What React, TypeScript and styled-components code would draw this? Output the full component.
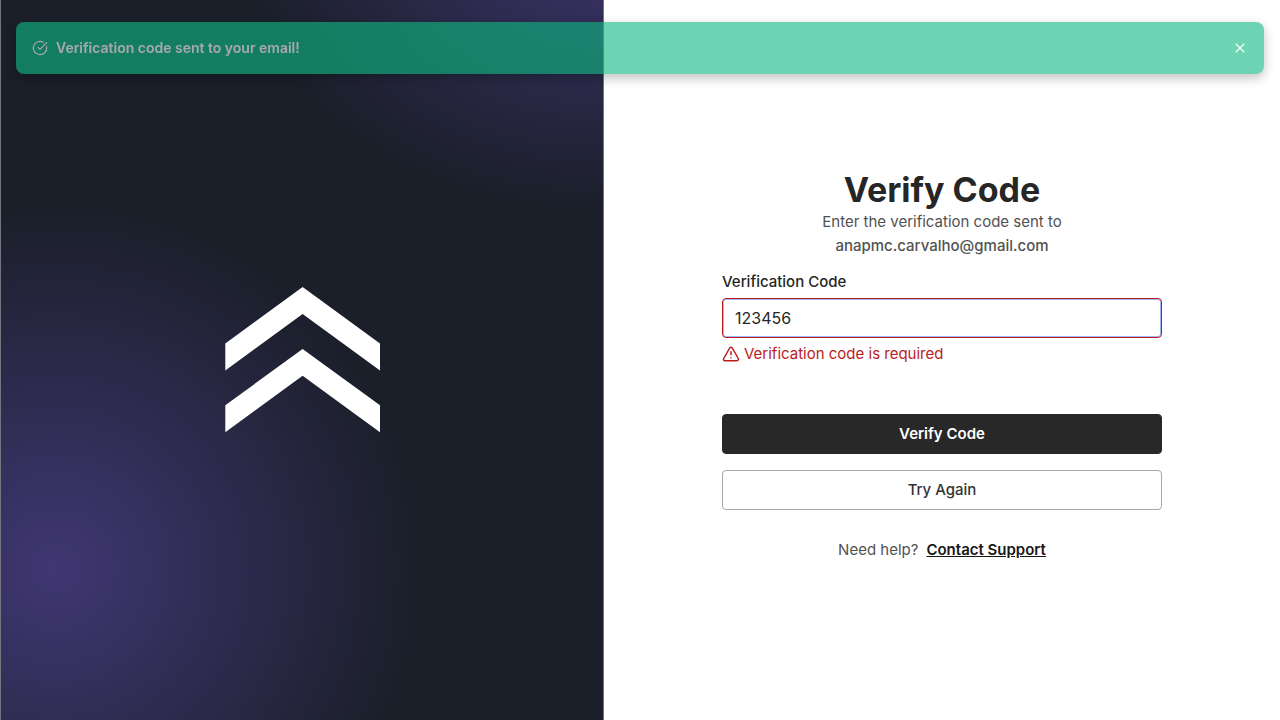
import React, { useState } from "react";
import styled, { createGlobalStyle } from "styled-components";
import { CircleCheckBig, TriangleAlert, X } from "lucide-react";

const GlobalStyle = createGlobalStyle`
  *, *::before, *::after { box-sizing: border-box; }
  body {
    margin: 0;
    background: #fff;
    color: #262626;
    font-family: Inter, "Liberation Sans", sans-serif;
    font-size: 15px;
    line-height: 24px;
  }
  button, input { font: inherit; color: inherit; }
  h1, p { margin: 0; }
`;

const Page = styled.div`
  display: grid;
  grid-template-columns: minmax(0, 604fr) minmax(0, 676fr);
  min-height: 100vh;
`;

const BrandPanel = styled.aside`
  display: flex;
  align-items: center;
  justify-content: center;
  border: solid #74757f;
  border-width: 0 1px;
  background:
    radial-gradient(circle at 9% 79%, #403773 0, rgba(64, 55, 115, 0) 360px),
    radial-gradient(ellipse 350px 250px at 100% -6%, #3a3368 0, rgba(58, 51, 104, 0) 100%),
    #1b1f2a;
`;

const Logo = styled.svg`
  width: 158px;
  height: 146px;
  fill: #fff;
`;

const FormPanel = styled.main`
  display: flex;
  flex-direction: column;
  align-items: center;
  justify-content: center;
  padding: 36px 24px 24px;
`;

const Form = styled.form`
  width: 100%;
  max-width: 440px;
  display: flex;
  flex-direction: column;
  gap: 12px;
`;

const Heading = styled.header`
  text-align: center;
  color: #525252;
`;

const Title = styled.h1`
  font-size: 34px;
  line-height: 40px;
  font-weight: 700;
  color: #262626;
`;

const Email = styled.p`
  font-weight: 500;
`;

const Field = styled.div`
  display: flex;
  flex-direction: column;
  gap: 4px;
`;

const Label = styled.label`
  font-weight: 500;
`;

const Input = styled.input`
  height: 40px;
  padding: 0 12px;
  border: 1px solid #b91c1c;
  border-radius: 4px;
  background: #fff;
  font-size: 16px;
  outline: none;
  box-shadow: inset 0 0 0 1px #9db9f5;
`;

const ErrorText = styled.p`
  display: flex;
  align-items: center;
  gap: 4px;
  color: #b91c1c;
`;

const Actions = styled.div`
  display: flex;
  flex-direction: column;
  gap: 16px;
  padding: 36px 0 16px;
`;

const Button = styled.button<{ $primary?: boolean }>`
  height: 40px;
  border: 1px solid ${(p) => (p.$primary ? "#282828" : "#a8a8a8")};
  border-radius: 4px;
  background: ${(p) => (p.$primary ? "#282828" : "#fff")};
  color: ${(p) => (p.$primary ? "#fff" : "#333")};
  font-weight: ${(p) => (p.$primary ? 600 : 500)};
  cursor: pointer;
`;

const Help = styled.p`
  display: flex;
  justify-content: center;
  gap: 8px;
  color: #525252;
`;

const Link = styled.a`
  color: #171717;
  font-weight: 600;
`;

const Toast = styled.div`
  position: fixed;
  top: 22px;
  left: 16px;
  right: 16px;
  display: flex;
  align-items: center;
  gap: 8px;
  padding: 16px;
  border-radius: 8px;
  background: #10b981;
  color: #fff;
  font-size: 14px;
  line-height: 20px;
  font-weight: 600;
  opacity: 0.61;
  box-shadow: 0 4px 12px rgba(0, 0, 0, 0.4);
`;

const CloseButton = styled.button`
  display: flex;
  margin-left: auto;
  padding: 0;
  border: 0;
  background: none;
  cursor: pointer;
`;

export default function App() {
  const [code, setCode] = useState("123456");
  const [toastOpen, setToastOpen] = useState(true);

  return (
    <>
      <GlobalStyle />
      <Page>
        <BrandPanel>
          <Logo viewBox="0 0 158 146" aria-hidden="true">
            <path d="M79.6 0 157 56.4V83.4L79.6 27 2.3 83.4V56.4Z" />
            <path d="M79.6 62 157 118.2V145.2L79.6 88.8 2.3 145.2V118.2Z" />
          </Logo>
        </BrandPanel>
        <FormPanel>
          <Form onSubmit={(e) => e.preventDefault()}>
            <Heading>
              <Title>Verify Code</Title>
              <p>Enter the verification code sent to</p>
              <Email>anapmc.carvalho@gmail.com</Email>
            </Heading>
            <Field>
              <Label htmlFor="code">Verification Code</Label>
              <Input
                id="code"
                value={code}
                onChange={(e) => setCode(e.target.value)}
                aria-invalid="true"
                aria-describedby="code-error"
              />
              <ErrorText id="code-error">
                <TriangleAlert size={18} />
                Verification code is required
              </ErrorText>
            </Field>
            <Actions>
              <Button type="submit" $primary>Verify Code</Button>
              <Button type="button">Try Again</Button>
            </Actions>
            <Help>
              Need help? <Link href="#support">Contact Support</Link>
            </Help>
          </Form>
        </FormPanel>
      </Page>
      {toastOpen && (
        <Toast role="status">
          <CircleCheckBig size={16} strokeWidth={1.75} />
          Verification code sent to your email!
          <CloseButton type="button" aria-label="Close" onClick={() => setToastOpen(false)}>
            <X size={16} strokeWidth={1.75} />
          </CloseButton>
        </Toast>
      )}
    </>
  );
}
